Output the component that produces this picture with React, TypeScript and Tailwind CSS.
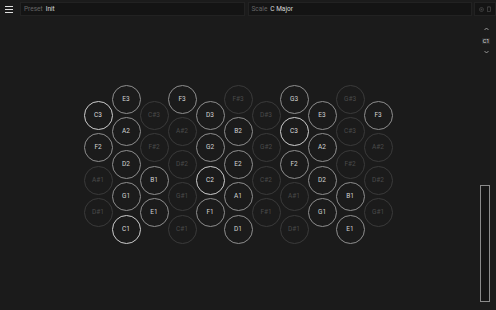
import React from "react";

const columns: string[][] = [
  ["C3", "F2", "A#1", "D#1"],
  ["E3", "A2", "D2", "G1", "C1"],
  ["C#3", "F#2", "B1", "E1"],
  ["F3", "A#2", "D#2", "G#1", "C#1"],
  ["D3", "G2", "C2", "F1"],
  ["F#3", "B2", "E2", "A1", "D1"],
  ["D#3", "G#2", "C#2", "F#1"],
  ["G3", "C3", "F2", "A#1", "D#1"],
  ["E3", "A2", "D2", "G1"],
  ["G#3", "C#3", "F#2", "B1", "E1"],
  ["F3", "A#2", "D#2", "G#1"],
];

function Key({ note }: { note: string }) {
  const sharp = note.includes("#");
  const isC = note.startsWith("C") && !sharp;
  const cls = isC
    ? "border-[1.5px] border-[#cdcdcd] text-[#dcdcdc]"
    : sharp
    ? "border border-[#3a3a3a] text-[#4a4a4a]"
    : "border border-[#8e8e8e] text-[#d2d2d2]";
  return (
    <div
      className={`w-[29px] h-[29px] shrink-0 rounded-full flex items-center justify-center text-[6.5px] font-normal leading-none ${cls}`}
    >
      {note}
    </div>
  );
}

export default function App() {
  return (
    <div
      className="w-[496px] h-[310px] bg-[#1b1b1b] flex flex-col overflow-hidden"
      style={{ fontFamily: "Roboto, 'Liberation Sans', sans-serif" }}
    >
      {/* top bar */}
      <div className="h-[18px] flex items-center shrink-0">
        <div className="w-[20px] h-full flex items-center justify-center">
          <div className="flex flex-col gap-[2px] ml-[-2px]">
            <div className="w-[8px] h-[1px] bg-[#e0e0e0]" />
            <div className="w-[8px] h-[1px] bg-[#e0e0e0]" />
            <div className="w-[8px] h-[1px] bg-[#e0e0e0]" />
          </div>
        </div>
        <div className="flex-1 h-[14px] bg-[#141414] border border-[#222] flex items-center pl-[3px] gap-[3px] text-[6.5px] leading-none">
          <span className="text-[#666]">Preset</span>
          <span className="text-[#d8d8d8]">Init</span>
        </div>
        <div className="w-[3px]" />
        <div className="flex-1 h-[14px] bg-[#141414] border border-[#222] flex items-center pl-[3px] gap-[3px] text-[6.5px] leading-none">
          <span className="text-[#666]">Scale</span>
          <span className="text-[#d8d8d8]">C Major</span>
        </div>
        <div className="w-[2px]" />
        <div className="w-[22px] h-[14px] bg-[#141414] border border-[#222] flex items-center justify-center gap-[3px]">
          <svg width="5" height="5" viewBox="0 0 10 10">
            <circle cx="5" cy="5" r="4" fill="none" stroke="#4a4a4a" strokeWidth="1.4" />
            <path d="M5 3v4M3 5h4" stroke="#4a4a4a" strokeWidth="1.2" />
          </svg>
          <svg width="4" height="6" viewBox="0 0 8 12">
            <rect x="1" y="2" width="6" height="9" fill="none" stroke="#4a4a4a" strokeWidth="1.4" />
            <path d="M3 0.8h2" stroke="#4a4a4a" strokeWidth="1.4" />
          </svg>
        </div>
      </div>

      {/* main */}
      <div className="flex-1 flex">
        <div className="flex-1 flex items-center justify-center">
          <div className="flex items-start">
            {columns.map((col, i) => (
              <div
                key={i}
                className={`w-[28px] flex flex-col items-center gap-[3.5px] ${
                  i % 2 === 0 ? "pt-[16px]" : ""
                }`}
              >
                {col.map((n, j) => (
                  <Key key={j} note={n} />
                ))}
              </div>
            ))}
          </div>
        </div>

        {/* right panel */}
        <div className="w-[20px] flex flex-col items-center">
          <svg width="5" height="4" viewBox="0 0 10 6" className="mt-[9px]">
            <path d="M1 5l4-4 4 4" fill="none" stroke="#bdbdbd" strokeWidth="1.5" />
          </svg>
          <div className="mt-[7px] px-[1px] h-[6px] bg-[#2a2a2a] text-[5.5px] leading-[6px] text-[#e0e0e0]">
            C1
          </div>
          <svg width="5" height="4" viewBox="0 0 10 6" className="mt-[6px]">
            <path d="M1 1l4 4 4-4" fill="none" stroke="#bdbdbd" strokeWidth="1.5" />
          </svg>
          <div className="flex-1" />
          <div className="w-[10px] h-[117px] mb-[8px] ml-[-2px] border border-[#8a8a8a] bg-[#151515]" />
        </div>
      </div>
    </div>
  );
}
